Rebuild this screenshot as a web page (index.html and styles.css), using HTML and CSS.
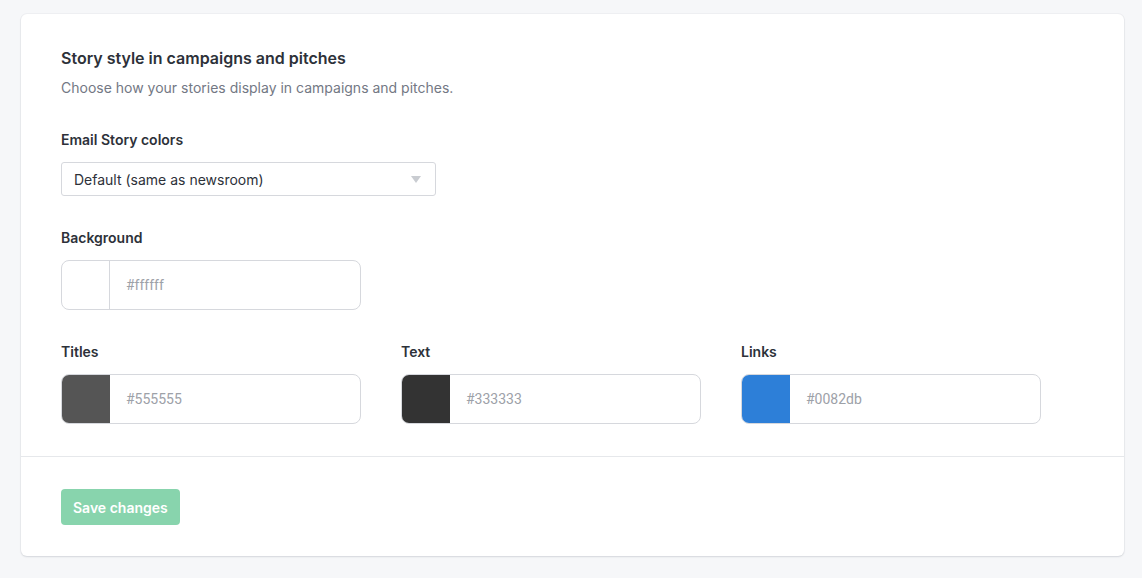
FILE: index.html
```html
<!DOCTYPE html>
<html lang="en">
<head>
  <meta charset="UTF-8" />
  <meta name="viewport" content="width=device-width, initial-scale=1.0"/>
  <title>Story style</title>
  <link rel="stylesheet" href="styles.css">
</head>
<body>
  <section class="card">
    <div class="card-body">
      <h2 class="title">Story style in campaigns and pitches</h2>
      <p class="subtitle">Choose how your stories display in campaigns and pitches.</p>

      <label class="label">Email Story colors</label>
      <div class="select">
        <span>Default (same as newsroom)</span>
        <span class="caret"></span>
      </div>

      <label class="label">Background</label>
      <div class="color-input">
        <span class="swatch swatch-white"></span>
        <span class="hex">#ffffff</span>
      </div>

      <div class="color-row">
        <div class="field">
          <label class="label">Titles</label>
          <div class="color-input">
            <span class="swatch" style="background:#555555"></span>
            <span class="hex">#555555</span>
          </div>
        </div>
        <div class="field">
          <label class="label">Text</label>
          <div class="color-input">
            <span class="swatch" style="background:#333333"></span>
            <span class="hex">#333333</span>
          </div>
        </div>
        <div class="field">
          <label class="label">Links</label>
          <div class="color-input">
            <span class="swatch" style="background:#2d7fd8"></span>
            <span class="hex">#0082db</span>
          </div>
        </div>
      </div>
    </div>

    <div class="card-footer">
      <button class="btn-save" disabled>Save changes</button>
    </div>
  </section>
</body>
</html>
```

FILE: styles.css
```css
body {
  margin: 0;
  padding: 14px 18px 22px 21px;
  background: #f6f7f9;
  font-family: Inter, "Noto Sans", sans-serif;
  color: #2d3139;
}

.card {
  background: #fff;
  border-radius: 6px;
  box-shadow: 0 1px 2px rgba(20, 30, 50, 0.12), 0 0 0 1px rgba(20, 30, 50, 0.03);
}

.card-body {
  padding: 32px 40px 32px;
}

.title {
  margin: 0;
  font-size: 16px;
  line-height: 24px;
  font-weight: 600;
  color: #2d3139;
}

.subtitle {
  margin: 8px 0 0;
  font-size: 14px;
  line-height: 20px;
  color: #737884;
}

.label {
  display: block;
  margin-top: 32px;
  font-size: 14px;
  line-height: 20px;
  font-weight: 600;
  color: #2d3139;
}

.select {
  margin-top: 12px;
  width: 375px;
  height: 34px;
  box-sizing: border-box;
  border: 1px solid #d6d8dd;
  border-radius: 3px;
  display: flex;
  align-items: center;
  justify-content: space-between;
  padding: 0 14px 0 12px;
  font-size: 14px;
  color: #2d3139;
}

.caret {
  width: 0;
  height: 0;
  border-left: 5px solid transparent;
  border-right: 5px solid transparent;
  border-top: 7px solid #c9ccd1;
}

.color-input {
  margin-top: 12px;
  width: 300px;
  height: 50px;
  box-sizing: border-box;
  border: 1px solid #d6d8dd;
  border-radius: 8px;
  display: flex;
  align-items: center;
  overflow: hidden;
}

.swatch {
  width: 48px;
  height: 100%;
  flex: none;
}

.swatch-white {
  border-right: 1px solid #d6d8dd;
  box-sizing: border-box;
}

.hex {
  padding-left: 16px;
  font-family: Roboto, sans-serif;
  font-size: 14px;
  color: #9da1a8;
}

.color-row {
  display: flex;
  gap: 40px;
}

.card-footer {
  border-top: 1px solid #e6e8eb;
  padding: 32px 40px 31px;
}

.btn-save {
  height: 36px;
  padding: 0 12px;
  border: none;
  border-radius: 4px;
  background: #88d4ad;
  color: #fff;
  font-family: Inter, sans-serif;
  font-size: 14px;
  font-weight: 600;
}
```
